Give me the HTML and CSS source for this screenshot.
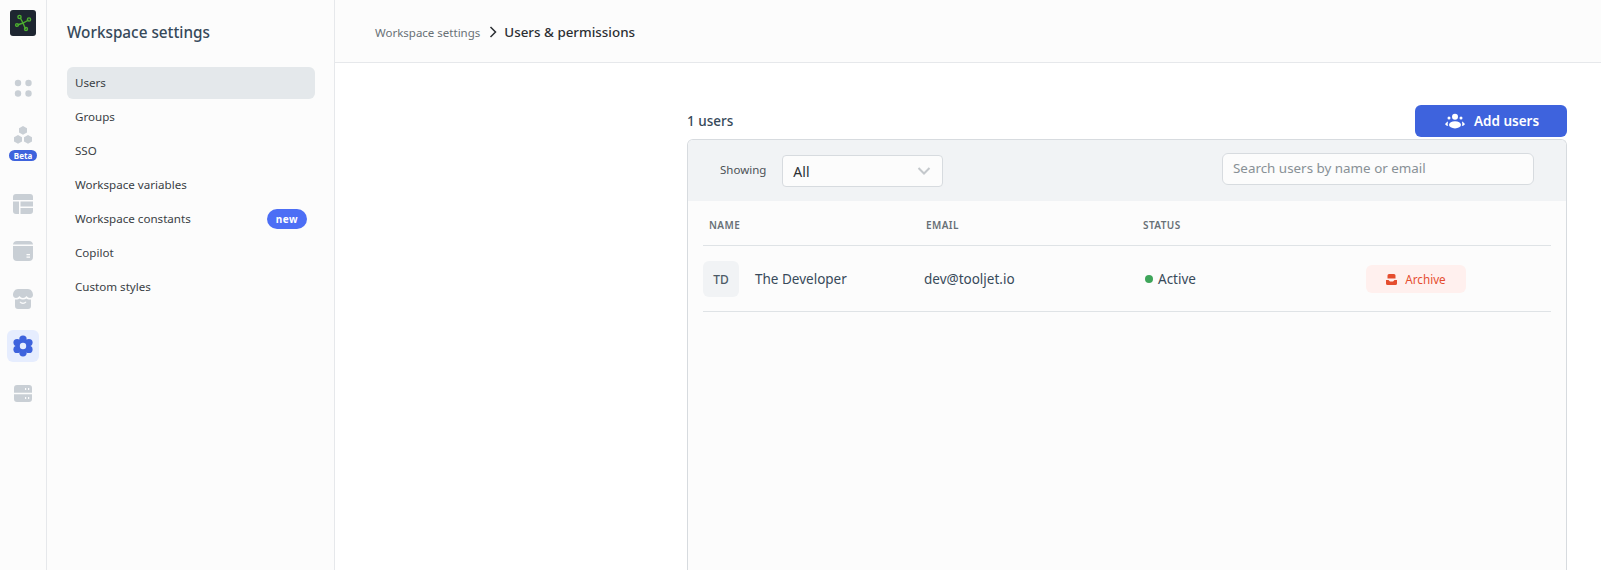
FILE: index.html
```html
<!DOCTYPE html>
<html lang="en">
<head>
  <meta charset="UTF-8" />
  <title>Workspace settings</title>
  <link rel="stylesheet" href="styles.css">
</head>
<body>
  <aside class="rail">
    <div class="logo">
      <svg width="18" height="18" viewBox="0 0 18 18" fill="none" stroke="#4cae2f" stroke-width="1.4">
        <path d="M6 3.500 L9 9 L11.500 15 M3.500 11 L9 9 L14.500 6" />
        <circle cx="5.500" cy="3" r="1.600" />
        <circle cx="3" cy="11" r="1.400" />
        <circle cx="15" cy="5.500" r="1.600" />
        <circle cx="12" cy="15" r="1.500" />
      </svg>
    </div>
    <div class="rail-item">
      <svg width="20" height="20" viewBox="0 0 20 20" fill="#c9cfd5">
        <circle cx="5" cy="5" r="3.200" /><circle cx="15.500" cy="5" r="3.200" />
        <circle cx="5" cy="15.500" r="3.200" /><circle cx="15.500" cy="15.500" r="3.200" />
      </svg>
    </div>
    <div class="rail-item rail-beta">
      <svg width="20" height="20" viewBox="0 0 20 20" fill="#c9cfd5">
        <path d="M10 1 L14 3.200 V7.600 L10 9.800 L6 7.600 V3.200 Z" />
        <path d="M5 10 L9 12.200 V16.600 L5 18.800 L1 16.600 V12.200 Z" />
        <path d="M15 10 L19 12.200 V16.600 L15 18.800 L11 16.600 V12.200 Z" />
      </svg>
      <span class="beta">Beta</span>
    </div>
    <div class="rail-item">
      <svg width="20" height="20" viewBox="0 0 20 20" fill="#c9cfd5">
        <path d="M3 0 H17 A3 3 0 0 1 20 3 V6 H0 V3 A3 3 0 0 1 3 0 Z" />
        <path d="M0 7.500 H6 V20 H3 A3 3 0 0 1 0 17 Z" />
        <path d="M7.500 7.500 H20 V12.500 H7.500 Z" />
        <path d="M7.500 14 H20 V17 A3 3 0 0 1 17 20 H7.500 Z" />
      </svg>
    </div>
    <div class="rail-item">
      <svg width="20" height="20" viewBox="0 0 20 20" fill="#c9cfd5">
        <path d="M4 0 H16 A4 4 0 0 1 20 3.500 H0 A4 4 0 0 1 4 0 Z" />
        <path d="M0 5 H20 V16 A4 4 0 0 1 16 20 H4 A4 4 0 0 1 0 16 Z M13.500 13 V14.200 H17 V13 Z M13.500 15.500 V16.700 H17 V15.500 Z" fill-rule="evenodd" />
      </svg>
    </div>
    <div class="rail-item">
      <svg width="20" height="20" viewBox="0 0 20 20" fill="#c9cfd5">
        <path d="M5 0 H15 C18 0 20 3 20 6 C20 8 18.500 9 17 9 C15.500 9 14.500 8 13.500 7 C12.500 8 11.500 9 10 9 C8.500 9 7.500 8 6.500 7 C5.500 8 4.500 9 3 9 C1.500 9 0 8 0 6 C0 3 2 0 5 0 Z" />
        <path d="M2 10.500 C4 10.800 5.500 10.300 6.500 9.500 C8.500 10.800 11.500 10.800 13.500 9.500 C14.500 10.300 16 10.800 18 10.500 V17 A3 3 0 0 1 15 20 H5 A3 3 0 0 1 2 17 Z M6.500 13 C8 15.500 12 15.500 13.500 13 L12.500 12.500 C11.500 14 8.500 14 7.500 12.500 Z" fill-rule="evenodd" />
      </svg>
    </div>
    <div class="rail-item rail-active">
      <svg width="22" height="22" viewBox="0 0 22 22">
        <g fill="#3e63dd">
          <circle cx="11" cy="11" r="7" />
          <circle cx="11" cy="4.200" r="3.700" /><circle cx="11" cy="17.800" r="3.700" />
          <circle cx="5.100" cy="7.600" r="3.700" /><circle cx="16.900" cy="7.600" r="3.700" />
          <circle cx="5.100" cy="14.400" r="3.700" /><circle cx="16.900" cy="14.400" r="3.700" />
        </g>
        <circle cx="11" cy="11" r="3.200" fill="#e6edfe" />
      </svg>
    </div>
    <div class="rail-item">
      <svg width="18" height="17" viewBox="0 0 18 17" fill="#c9cfd5">
        <path d="M3 0 H15 A3 3 0 0 1 18 3 V7.800 H0 V3 A3 3 0 0 1 3 0 Z M11 3 V5 H12.200 V3 Z M14 3 V5 H15.200 V3 Z" fill-rule="evenodd" />
        <path d="M0 9.200 H18 V14 A3 3 0 0 1 15 17 H3 A3 3 0 0 1 0 14 Z M11 12 V14 H12.200 V12 Z M14 12 V14 H15.200 V12 Z" fill-rule="evenodd" />
      </svg>
    </div>
  </aside>

  <nav class="side">
    <h1 class="side-title">Workspace settings</h1>
    <a class="side-link side-link-active" href="#">Users</a>
    <a class="side-link" href="#">Groups</a>
    <a class="side-link" href="#">SSO</a>
    <a class="side-link" href="#">Workspace variables</a>
    <a class="side-link" href="#">Workspace constants <span class="new">new</span></a>
    <a class="side-link" href="#">Copilot</a>
    <a class="side-link" href="#">Custom styles</a>
  </nav>

  <div class="page">
    <header class="crumbs">
      <span class="crumb">Workspace settings</span>
      <svg class="crumb-sep" width="8" height="12" viewBox="0 0 8 12" fill="none" stroke="#2b2f33" stroke-width="1.500"><path d="M1.500 1 L6.500 6 L1.500 11" /></svg>
      <span class="crumb-now">Users &amp; permissions</span>
    </header>

    <main class="content">
      <div class="top-row">
        <span class="count">1 users</span>
        <button class="add-btn">
          <svg width="20" height="16" viewBox="0 0 20 16" fill="#fff">
            <circle cx="10" cy="3.800" r="3" />
            <circle cx="4" cy="5" r="1.500" /><circle cx="16" cy="5" r="1.500" />
            <ellipse cx="10" cy="11.800" rx="6" ry="3.600" />
            <path d="M0 11 L2.500 8.500 L3 9 C2.600 10.500 2.600 11.500 3.200 13 C1.800 13 .6 12.300 0 11 Z" />
            <path d="M20 11 L17.500 8.500 L17 9 C17.400 10.500 17.400 11.500 16.800 13 C18.200 13 19.400 12.300 20 11 Z" />
          </svg>
          Add users
        </button>
      </div>

      <section class="card">
        <div class="filters">
          <label class="show-label">Showing</label>
          <div class="select">
            <span>All</span>
            <svg width="14" height="8" viewBox="0 0 14 8" fill="none" stroke="#c4c8cc" stroke-width="2"><path d="M1.500 1 L7 6.500 L12.500 1" /></svg>
          </div>
          <input class="search" type="text" placeholder="Search users by name or email">
        </div>

        <div class="table">
          <div class="thead">
            <span>NAME</span>
            <span>EMAIL</span>
            <span>STATUS</span>
          </div>
          <div class="row">
            <div class="user">
              <span class="avatar">TD</span>
              <span>The Developer</span>
            </div>
            <span class="email">dev@tooljet.io</span>
            <span class="status"><i class="dot"></i>Active</span>
            <button class="archive">
              <svg width="11" height="11" viewBox="0 0 11 11" fill="#e54d2e">
                <path d="M3 0 H8 A1.500 1.500 0 0 1 9.500 1.500 V4.500 H1.500 V1.500 A1.500 1.500 0 0 1 3 0 Z" />
                <path d="M0 6 H2.500 L4 7.500 H7 L8.500 6 H11 V9.500 A1.500 1.500 0 0 1 9.500 11 H1.500 A1.500 1.500 0 0 1 0 9.500 Z" />
              </svg>
              Archive
            </button>
          </div>
        </div>
      </section>
    </main>
  </div>
</body>
</html>
```

FILE: styles.css
```css
*{margin:0;padding:0;box-sizing:border-box}
html,body{height:100%;overflow:hidden}
body{display:flex;font-family:"Noto Sans","Liberation Sans",sans-serif;background:#fff;color:#384151;font-size:13px}

.rail{width:47px;flex:none;background:#fcfcfc;border-right:1px solid #e6e8eb;display:flex;flex-direction:column;align-items:center;padding:10px 0 0 0;gap:15.5px}
.logo{width:26px;height:26px;background:#1e2631;border-radius:3px;display:flex;align-items:center;justify-content:center;margin-bottom:20.5px}
.rail-item{width:32px;height:32px;border-radius:6px;display:flex;align-items:center;justify-content:center;flex:none}
.rail-beta{height:52px;flex-direction:column;justify-content:flex-start;margin-top:.5px;gap:5px;padding-top:5px}
.rail-active{background:#e6edfe}
.beta{background:#3e63dd;color:#fff;font-size:8px;font-weight:700;line-height:11px;padding:0 5px;border-radius:6px}

.side{width:288px;flex:none;background:#fcfcfc;border-right:1px solid #e6e8eb;padding:0 19px 0 20px;display:flex;flex-direction:column}
.side-title{font-size:15.3px;font-weight:500;color:#36495a;line-height:22px;margin:21px 0 24px 0}
.side-link{height:32px;flex:none;margin-bottom:2px;padding:0 8px 2px 8px;display:flex;align-items:center;justify-content:space-between;color:#3a3f45;text-decoration:none;font-size:11.6px;border-radius:6px}
.side-link-active{background:#e4e8eb}
.new{background:#4c6ef5;color:#fff;font-size:10px;font-weight:700;line-height:20px;width:40px;text-align:center;border-radius:10px;letter-spacing:.5px;margin-top:2px}

.page{flex:1;display:flex;flex-direction:column;min-width:0}
.crumbs{height:63px;flex:none;background:#fcfcfc;border-bottom:1px solid #e6e8eb;display:flex;align-items:center;padding:2px 0 0 40px}
.crumb{font-size:11.5px;color:#687076}
.crumb-sep{margin:0 7px 0 9px}
.crumb-now{font-size:13.4px;font-weight:500;color:#2b2f33}

.content{flex:1;min-height:0;width:880px;margin-left:352px;padding-top:42px;display:flex;flex-direction:column}
.top-row{display:flex;justify-content:space-between;align-items:center;height:32px;margin-bottom:2px;flex:none}
.count{font-size:13.5px;font-weight:500;color:#36495a;margin-top:-1px}
.add-btn{width:152px;height:32px;border:none;border-radius:6px;padding-left:2px;background:#3e63dd;color:#fff;font:600 13.5px "Noto Sans",sans-serif;display:flex;align-items:center;justify-content:center;gap:9px;cursor:pointer}

.card{flex:1;border:1px solid #d7dbdf;border-bottom:none;border-radius:6px 6px 0 0;background:#fcfcfc;overflow:hidden}
.filters{height:61px;background:#f1f3f5;display:flex;align-items:flex-start;padding-left:32px}
.show-label{font-size:11.5px;color:#4c5155;margin-top:22px}
.select{width:161px;height:32px;margin:15px 0 0 16px;background:#fcfcfc;border:1px solid #d7dbdf;border-radius:4px;display:flex;align-items:center;justify-content:space-between;padding:0 11px 0 10px;font-size:14px;color:#2b2f33}
.search{width:312px;height:32px;margin:13px 32px 0 auto;background:#fcfcfc;border:1px solid #d7dbdf;border-radius:6px;padding:0 10px 2px 10px;font:13.4px "Noto Sans",sans-serif;color:#384151;outline:none}
.search::placeholder{color:#889096}

.table{margin:0 15px}
.thead{height:45px;padding:4px 0 0 6px;border-bottom:1px solid #dfe3e6;display:grid;grid-template-columns:217px 217px 1fr;align-items:center;font-size:10px;font-weight:600;letter-spacing:.4px;color:#687076}
.row{height:66px;padding-top:1px;border-bottom:1px solid #dfe3e6;display:grid;grid-template-columns:221px 221px 221px 1fr;align-items:center;font-size:13.5px;color:#384a5a}
.user{display:flex;align-items:center;gap:16px}
.avatar{width:36px;height:36px;background:#f1f3f5;border-radius:6px;display:flex;align-items:center;justify-content:center;font-size:12px;font-weight:500;color:#4c5a66}
.status{display:flex;align-items:center;gap:5px}
.dot{width:8px;height:8px;border-radius:50%;background:#3ea55a}
.archive{width:100px;height:28px;border:none;border-radius:6px;background:#fff0ee;color:#e54d2e;font:11.7px "Noto Sans",sans-serif;display:flex;align-items:center;justify-content:center;gap:8px;cursor:pointer}
```
